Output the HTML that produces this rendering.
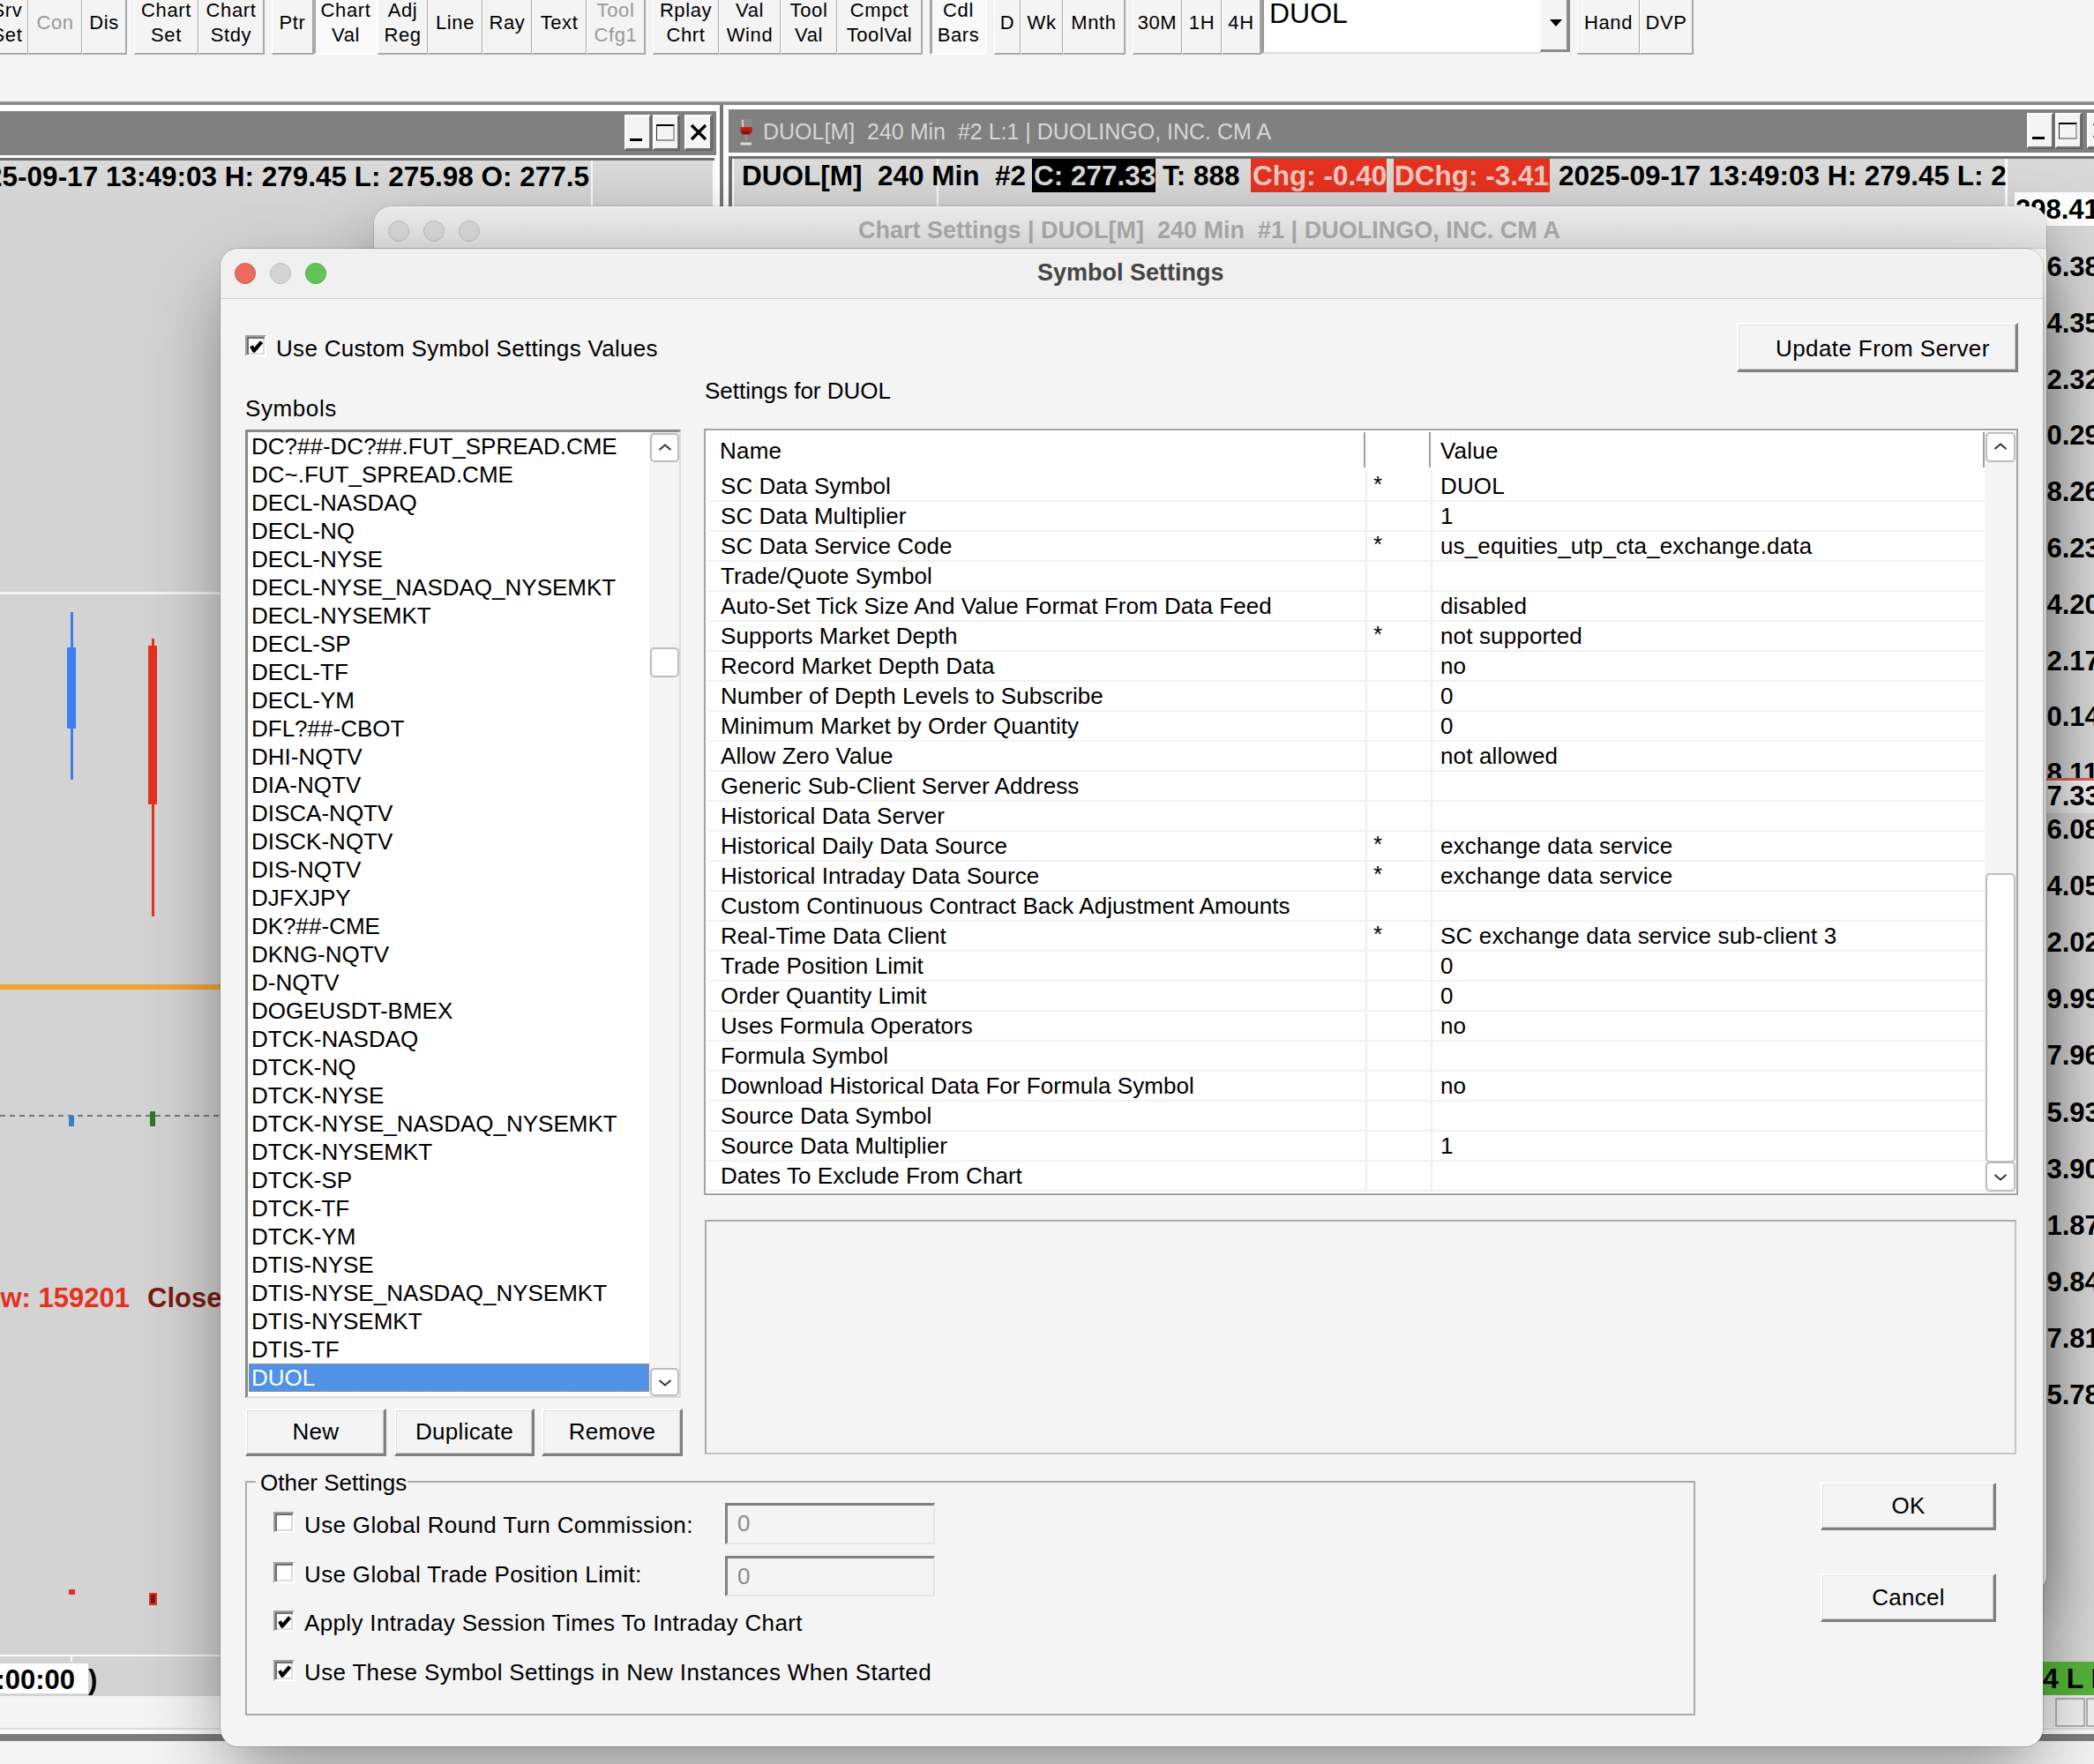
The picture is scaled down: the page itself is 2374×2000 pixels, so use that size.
<!DOCTYPE html><html><head><meta charset="utf-8"><style>
*{margin:0;padding:0;box-sizing:border-box}
html,body{width:2374px;height:2000px;overflow:hidden;background:#f4f4f4;font-family:"Liberation Sans",sans-serif;color:#000}
.abs{position:absolute}
.t{position:absolute;white-space:pre;line-height:1}
.tb{position:absolute;top:0;height:62px;background:#f4f4f4;border-right:2px solid #a9a9a9;border-bottom:2px solid #a9a9a9;border-left:1px solid #fff;font-size:22px;letter-spacing:0.6px;text-align:center;line-height:28px;white-space:pre}
.tb.pr{background-color:#f9f9f9;border-left:3px solid #a8a8a8;border-right:3px solid #fdfdfd;border-bottom:2px solid #fdfdfd}
.tb.g{color:#999}
</style></head><body>

<div class="tb" style="left:-16px;width:49px;padding-top:0px;line-height:28px;"><div style="margin-top:-2px">Srv<br>Set</div></div>
<div class="tb g" style="left:32px;width:62px;"><div style="margin-top:12px">Con</div></div>
<div class="tb" style="left:93px;width:51px;"><div style="margin-top:12px">Dis</div></div>
<div class="tb" style="left:152px;width:74px;padding-top:0px;line-height:28px;"><div style="margin-top:-2px">Chart<br>Set</div></div>
<div class="tb" style="left:225px;width:75px;padding-top:0px;line-height:28px;"><div style="margin-top:-2px">Chart<br>Stdy</div></div>
<div class="tb" style="left:308px;width:48px;"><div style="margin-top:12px">Ptr</div></div>
<div class="tb pr" style="left:355px;width:74px;padding-top:0px;line-height:28px;"><div style="margin-top:-2px">Chart<br>Val</div></div>
<div class="tb" style="left:428px;width:58px;padding-top:0px;line-height:28px;"><div style="margin-top:-2px">Adj<br>Reg</div></div>
<div class="tb" style="left:485px;width:63px;"><div style="margin-top:12px">Line</div></div>
<div class="tb" style="left:547px;width:57px;"><div style="margin-top:12px">Ray</div></div>
<div class="tb" style="left:603px;width:63px;"><div style="margin-top:12px">Text</div></div>
<div class="tb g" style="left:665px;width:67px;padding-top:0px;line-height:28px;"><div style="margin-top:-2px">Tool<br>Cfg1</div></div>
<div class="tb" style="left:740px;width:76px;padding-top:0px;line-height:28px;"><div style="margin-top:-2px">Rplay<br>Chrt</div></div>
<div class="tb" style="left:815px;width:71px;padding-top:0px;line-height:28px;"><div style="margin-top:-2px">Val<br>Wind</div></div>
<div class="tb" style="left:885px;width:65px;padding-top:0px;line-height:28px;"><div style="margin-top:-2px">Tool<br>Val</div></div>
<div class="tb" style="left:949px;width:97px;padding-top:0px;line-height:28px;"><div style="margin-top:-2px">Cmpct<br>ToolVal</div></div>
<div class="tb pr" style="left:1054px;width:65px;padding-top:0px;line-height:28px;"><div style="margin-top:-2px">Cdl<br>Bars</div></div>
<div class="tb" style="left:1127px;width:31px;"><div style="margin-top:12px">D</div></div>
<div class="tb" style="left:1157px;width:49px;"><div style="margin-top:12px">Wk</div></div>
<div class="tb" style="left:1205px;width:71px;"><div style="margin-top:12px">Mnth</div></div>
<div class="tb" style="left:1284px;width:57px;"><div style="margin-top:12px">30M</div></div>
<div class="tb" style="left:1340px;width:46px;"><div style="margin-top:12px">1H</div></div>
<div class="tb" style="left:1385px;width:45px;"><div style="margin-top:12px">4H</div></div>
<div class="tb" style="left:1788px;width:72px;"><div style="margin-top:12px">Hand</div></div>
<div class="tb" style="left:1859px;width:61px;"><div style="margin-top:12px">DVP</div></div>
<div class="abs" style="left:1430px;top:0;width:317px;height:61px;background:#fff;border-left:3px solid #9a9a9a;border-bottom:2px solid #dcdcdc"></div>
<div class="t" style="left:1439px;top:-1px;font-size:32px">DUOL</div>
<div class="abs" style="left:1746px;top:0;width:34px;height:59px;background:#f4f4f4;border-right:4px solid #8a8a8a;border-bottom:3px solid #8a8a8a;border-left:1px solid #fff"></div>
<div class="abs" style="left:1757px;top:22px;width:0;height:0;border-left:7px solid transparent;border-right:7px solid transparent;border-top:8px solid #000"></div>
<div class="abs" style="left:0;top:115px;width:2374px;height:4px;background:#888;border-top:1px solid #a0a0a0"></div>
<div class="abs" style="left:0;top:119px;width:2374px;height:7px;background:#fff"></div>
<div class="abs" style="left:0;top:126px;width:812px;height:50px;background:#808080"></div>
<div class="abs" style="left:708px;top:130px;width:30px;height:40px;background:#f4f4f4;border-top:2px solid #fff;border-left:2px solid #fff;border-right:2px solid #707070;border-bottom:2px solid #707070;box-shadow:1px 1px 0 #606060"></div>
<div class="abs" style="left:714px;top:157px;width:14px;height:3px;background:#000"></div>
<div class="abs" style="left:740px;top:130px;width:30px;height:40px;background:#f4f4f4;border-top:2px solid #fff;border-left:2px solid #fff;border-right:2px solid #707070;border-bottom:2px solid #707070;box-shadow:1px 1px 0 #606060"></div>
<div class="abs" style="left:744px;top:141px;width:21px;height:19px;border:1.5px solid #333;border-top:2.5px solid #000;border-right:2px solid #aaa;border-bottom:2px solid #999"></div>
<div class="abs" style="left:776px;top:130px;width:31px;height:40px;background:#f4f4f4;border-top:2px solid #fff;border-left:2px solid #fff;border-right:2px solid #707070;border-bottom:2px solid #707070;box-shadow:1px 1px 0 #606060"></div>
<svg class="abs" style="left:782px;top:140px" width="20" height="20" viewBox="0 0 20 20"><path d="M2 2L18 18M18 2L2 18" stroke="#000" stroke-width="3.2"/></svg>
<div class="abs" style="left:0;top:176px;width:812px;height:3px;background:#fff"></div>
<div class="abs" style="left:0;top:179px;width:810px;height:3px;background:#6e6e6e"></div>
<div class="abs" style="left:812px;top:119px;width:4px;height:120px;background:#fff"></div>
<div class="abs" style="left:816px;top:119px;width:4px;height:120px;background:#777"></div>
<div class="abs" style="left:820px;top:119px;width:6px;height:120px;background:#fff"></div>
<div class="abs" style="left:0;top:182px;width:809px;height:1760px;background:linear-gradient(#dadada,#d3d3d3 50px,#d3d3d3)"></div>
<div class="abs" style="left:808px;top:182px;width:4px;height:60px;background:#fbfbfb"></div>
<div class="abs" style="left:670px;top:182px;width:2px;height:52px;background:#fafafa"></div>
<div class="t" style="right:1706px;top:185px;font-size:31.5px;font-weight:700;text-align:right">2025-09-17 13:49:03 H: 279.45 L: 275.98 O: 277.5</div>
<div class="abs" style="left:826px;top:124px;width:1548px;height:49px;background:#808080"></div>
<svg class="abs" style="left:836px;top:133px" width="20" height="34" viewBox="0 0 20 34"><rect x="3.5" y="2" width="13" height="9" fill="#999" opacity=".35"/><rect x="5" y="3" width="2" height="8" fill="#e0e0e0" opacity=".8"/><path d="M3.5 11h13v5.5l-2 3h-9l-2-3z" fill="#b01a14"/><rect x="3.5" y="11" width="13" height="2" fill="#c82418"/><rect x="5" y="16" width="8" height="3" fill="#6a0c08" opacity=".6"/><rect x="9" y="20" width="2" height="6" fill="#9a9a9a"/><rect x="3.5" y="28.5" width="12.5" height="3" fill="#dadada"/></svg>
<div class="t" style="left:865px;top:137px;font-size:25px;color:#d6d6d6">DUOL[M]  240 Min  #2 L:1 | DUOLINGO, INC. CM A</div>
<div class="abs" style="left:2298px;top:128px;width:30px;height:40px;background:#f4f4f4;border-top:2px solid #fff;border-left:2px solid #fff;border-right:2px solid #707070;border-bottom:2px solid #707070;box-shadow:1px 1px 0 #606060"></div>
<div class="abs" style="left:2304px;top:155px;width:14px;height:3px;background:#000"></div>
<div class="abs" style="left:2330px;top:128px;width:30px;height:40px;background:#f4f4f4;border-top:2px solid #fff;border-left:2px solid #fff;border-right:2px solid #707070;border-bottom:2px solid #707070;box-shadow:1px 1px 0 #606060"></div>
<div class="abs" style="left:2334px;top:139px;width:21px;height:19px;border:1.5px solid #333;border-top:2.5px solid #000;border-right:2px solid #aaa;border-bottom:2px solid #999"></div>
<div class="abs" style="left:2366px;top:128px;width:30px;height:40px;background:#f4f4f4;border-top:2px solid #fff;border-left:2px solid #fff;border-right:2px solid #707070;border-bottom:2px solid #707070;box-shadow:1px 1px 0 #606060"></div>
<svg class="abs" style="left:2372px;top:138px" width="20" height="20" viewBox="0 0 20 20"><path d="M2 2L18 18M18 2L2 18" stroke="#000" stroke-width="3.2"/></svg>
<div class="abs" style="left:826px;top:173px;width:1548px;height:4px;background:#fff"></div>
<div class="abs" style="left:826px;top:177px;width:1548px;height:3px;background:#6e6e6e"></div>
<div class="abs" style="left:826px;top:177px;width:4px;height:1800px;background:#6e6e6e"></div>
<div class="abs" style="left:830px;top:180px;width:1544px;height:1750px;background:linear-gradient(#dadada,#d3d3d3 53px,#d3d3d3)"></div>
<div class="abs" style="left:830px;top:180px;width:2px;height:55px;background:#fff"></div>
<div class="abs" style="left:1062px;top:180px;width:2px;height:55px;background:#fafafa"></div>
<div class="abs" style="left:2273px;top:180px;width:3px;height:55px;background:#fafafa"></div>
<div class="t" style="left:841px;top:184px;font-size:31.5px;font-weight:700">DUOL[M]  240 Min  #2</div>
<div class="abs" style="left:1170px;top:180px;width:140px;height:38px;background:#000"></div>
<div class="t" style="left:1172px;top:184px;font-size:31.5px;font-weight:700;color:#d8d8d8">C: 277.33</div>
<div class="t" style="left:1318px;top:184px;font-size:31.5px;font-weight:700">T: 888</div>
<div class="abs" style="left:1418px;top:180px;width:154px;height:38px;background:#e3321f"></div>
<div class="t" style="left:1420px;top:184px;font-size:31.5px;font-weight:700;color:#f0c8c0">Chg: -0.40</div>
<div class="abs" style="left:1580px;top:180px;width:177px;height:38px;background:#e3321f"></div>
<div class="t" style="left:1581px;top:184px;font-size:31.5px;font-weight:700;color:#f0c8c0">DChg: -3.41</div>
<div class="t" style="left:1767px;top:184px;font-size:31.5px;font-weight:700">2025-09-17 13:49:03 H: 279.45 L: 2</div>
<div class="abs" style="left:2316px;top:235px;width:58px;height:1650px;background:linear-gradient(90deg,#d0d0d0,#d6d6d6 30px,#d8d8d8)"></div>
<div class="abs" style="left:2284px;top:218px;width:90px;height:38px;background:#fff"></div>
<div class="t" style="left:2285px;top:222px;font-size:31px;font-weight:700">298.41</div>
<div class="t" style="left:2286px;top:287.0px;font-size:31px;font-weight:700">296.38</div>
<div class="t" style="left:2286px;top:350.8px;font-size:31px;font-weight:700">294.35</div>
<div class="t" style="left:2286px;top:414.6px;font-size:31px;font-weight:700">292.32</div>
<div class="t" style="left:2286px;top:478.4px;font-size:31px;font-weight:700">290.29</div>
<div class="t" style="left:2286px;top:542.2px;font-size:31px;font-weight:700">288.26</div>
<div class="t" style="left:2286px;top:606.0px;font-size:31px;font-weight:700">286.23</div>
<div class="t" style="left:2286px;top:669.8px;font-size:31px;font-weight:700">284.20</div>
<div class="t" style="left:2286px;top:733.6px;font-size:31px;font-weight:700">282.17</div>
<div class="t" style="left:2286px;top:797.4px;font-size:31px;font-weight:700">280.14</div>
<div class="t" style="left:2286px;top:861.2px;font-size:31px;font-weight:700">278.11</div>
<div class="t" style="left:2286px;top:925.0px;font-size:31px;font-weight:700">276.08</div>
<div class="t" style="left:2286px;top:989.1px;font-size:31px;font-weight:700">274.05</div>
<div class="t" style="left:2286px;top:1053.2px;font-size:31px;font-weight:700">272.02</div>
<div class="t" style="left:2286px;top:1117.3px;font-size:31px;font-weight:700">269.99</div>
<div class="t" style="left:2286px;top:1181.4px;font-size:31px;font-weight:700">267.96</div>
<div class="t" style="left:2286px;top:1245.5px;font-size:31px;font-weight:700">265.93</div>
<div class="t" style="left:2286px;top:1309.6px;font-size:31px;font-weight:700">263.90</div>
<div class="t" style="left:2286px;top:1373.7px;font-size:31px;font-weight:700">261.87</div>
<div class="t" style="left:2286px;top:1437.8px;font-size:31px;font-weight:700">259.84</div>
<div class="t" style="left:2286px;top:1501.9px;font-size:31px;font-weight:700">257.81</div>
<div class="t" style="left:2286px;top:1566.0px;font-size:31px;font-weight:700">255.78</div>
<div class="abs" style="left:2316px;top:882px;width:58px;height:3px;background:#e06060"></div>
<div class="abs" style="left:2316px;top:885px;width:58px;height:37px;background:linear-gradient(#f8f8f8,#e8e8e8)"></div>
<div class="t" style="left:2286px;top:887px;font-size:31px;font-weight:700">277.33</div>
<div class="abs" style="left:0;top:671px;width:812px;height:3px;background:#f4f4f4"></div>
<div class="abs" style="left:80px;top:694px;width:3px;height:190px;background:#3b7ff0"></div>
<div class="abs" style="left:76px;top:734px;width:10px;height:92px;background:#3b7ff0"></div>
<div class="abs" style="left:172px;top:724px;width:3px;height:315px;background:#e3321f"></div>
<div class="abs" style="left:168px;top:732px;width:10px;height:180px;background:#e3321f"></div>
<div class="abs" style="left:0;top:1116px;width:812px;height:6px;background:#f0a438"></div>
<div class="abs" style="left:0;top:1264px;width:812px;height:2px;background:repeating-linear-gradient(90deg,#777 0 6px,transparent 6px 11px)"></div>
<div class="abs" style="left:78px;top:1265px;width:6px;height:12px;background:#3a80c8"></div>
<div class="abs" style="left:170px;top:1260px;width:6px;height:17px;background:#2c7a22"></div>
<div class="t" style="right:2227px;top:1456px;font-size:31px;font-weight:700;color:#e3321f">Volume Now: 159201</div>
<div class="t" style="left:167px;top:1456px;font-size:31px;font-weight:700;color:#7a1a10">Close</div>
<div class="abs" style="left:78px;top:1802px;width:7px;height:6px;background:#e3321f"></div>
<div class="abs" style="left:169px;top:1806px;width:9px;height:14px;background:#7a1a10;border:2px solid #e3321f"></div>
<div class="abs" style="left:0;top:1876px;width:812px;height:2px;background:#f8f8f8"></div>
<div class="abs" style="left:80px;top:1877px;width:2px;height:7px;background:#f8f8f8"></div>
<div class="abs" style="left:0;top:1886px;width:100px;height:34px;background:#fff"></div>
<div class="t" style="right:2289px;top:1889px;font-size:31px;font-weight:700">2025-09-17 12:00:00</div>
<div class="t" style="left:100px;top:1889px;font-size:31px;font-weight:700">)</div>
<div class="abs" style="left:0;top:1923px;width:2374px;height:36px;background:#f4f4f4"></div>
<div class="abs" style="left:0;top:1959px;width:2374px;height:2px;background:#dcdcdc"></div>
<div class="abs" style="left:0;top:1961px;width:2374px;height:5px;background:#fafafa"></div>
<div class="abs" style="left:0;top:1966px;width:2374px;height:8px;background:#7c7c7c"></div>
<div class="abs" style="left:0;top:1974px;width:2374px;height:26px;background:#f4f4f4"></div>
<div class="abs" style="left:2316px;top:1884px;width:58px;height:38px;background:#57b33a"></div>
<div class="t" style="left:2316px;top:1887px;font-size:32px;font-weight:700">4 L E</div>
<div class="abs" style="left:2316px;top:1922px;width:58px;height:36px;background:#ececec"></div>
<div class="abs" style="left:2330px;top:1925px;width:34px;height:33px;border:2px solid #b0b0b0;background:#f0f0f0"></div>
<div class="abs" style="left:2365px;top:1925px;width:34px;height:33px;border:2px solid #b0b0b0;background:#f0f0f0"></div>
<div class="abs" style="left:424px;top:234px;width:1896px;height:1572px;border-radius:20px;background:#f4f4f4;box-shadow:0 30px 80px -10px rgba(0,0,0,.4),0 0 0 1px rgba(0,0,0,.12);overflow:hidden"><div class="abs" style="left:0;top:0;width:1896px;height:48px;background:linear-gradient(#ebebeb,#e0e0e0);border-top:1px solid #f6f6f6;border-bottom:1px solid #c8c8c8"></div></div>
<div class="abs" style="left:440px;top:250px;width:24px;height:24px;border-radius:50%;background:#d6d6d6;border:1px solid #bdbdbd"></div>
<div class="abs" style="left:480px;top:250px;width:24px;height:24px;border-radius:50%;background:#d6d6d6;border:1px solid #bdbdbd"></div>
<div class="abs" style="left:520px;top:250px;width:24px;height:24px;border-radius:50%;background:#d6d6d6;border:1px solid #bdbdbd"></div>
<div class="t" style="left:973px;top:248px;font-size:27px;font-weight:700;color:#a9a9a9">Chart Settings | DUOL[M]  240 Min  #1 | DUOLINGO, INC. CM A</div>
<div class="abs" style="left:250px;top:282px;width:2066px;height:1698px;border-radius:20px;background:#f4f4f4;box-shadow:0 36px 90px -10px rgba(0,0,0,.45),0 0 0 1px rgba(0,0,0,.15);overflow:hidden"><div class="abs" style="left:0;top:0;width:2066px;height:57px;background:#eff0ef;border-bottom:1px solid #cdcdcd"></div></div>
<div class="abs" style="left:266px;top:298px;width:24px;height:24px;border-radius:50%;background:#ed6a5e;border:1px solid #d05448"></div>
<div class="abs" style="left:306px;top:298px;width:24px;height:24px;border-radius:50%;background:#d4d4d4;border:1px solid #bcbcbc"></div>
<div class="abs" style="left:346px;top:298px;width:24px;height:24px;border-radius:50%;background:#61c554;border:1px solid #4fa843"></div>
<div class="t" style="left:1176px;top:296px;font-size:27px;font-weight:700;color:#454545">Symbol Settings</div>
<div class="abs" style="left:278px;top:380px;width:24px;height:24px;background:#fff;border-top:2px solid #a0a0a0;border-left:2px solid #a0a0a0;border-right:2px solid #fff;border-bottom:2px solid #fff;box-shadow:inset 2px 2px 0 #6e6e6e, inset -2px -2px 0 #dcdcdc"></div>
<svg class="abs" style="left:278px;top:380px" width="24" height="24" viewBox="0 0 24 24"><path d="M7 12.3L10 17.6L18.6 7.6" fill="none" stroke="#000" stroke-width="4.2" stroke-linejoin="round"/></svg>
<div class="t" style="left:313px;top:381.8px;font-size:26px;color:#000;letter-spacing:0.3px;font-weight:400;">Use Custom Symbol Settings Values</div>
<div class="abs" style="left:1969px;top:366px;width:319px;height:56px;background:#f4f4f4;border-top:2px solid #fdfdfd;border-left:2px solid #fdfdfd;border-right:3px solid #808080;border-bottom:3px solid #808080;box-shadow:inset -1px -1px 0 #c8c8c8, inset 1px 1px 0 #e0e0e0"></div>
<div class="t" style="left:2013px;top:382.4px;font-size:26px;color:#000;letter-spacing:0.4px;font-weight:400;">Update From Server</div>
<div class="t" style="left:278px;top:450.0px;font-size:26px;color:#000;letter-spacing:0.6px;font-weight:400;">Symbols</div>
<div class="t" style="left:799px;top:429.7px;font-size:26px;color:#000;letter-spacing:0px;font-weight:400;">Settings for DUOL</div>
<div class="abs" style="left:278px;top:487px;width:493px;height:98px;"></div>
<div class="abs" style="left:278px;top:487px;width:494px;height:1098px;background:#fff;border-top:3px solid #8a8a8a;border-left:3px solid #8a8a8a;border-right:2px solid #dedede;border-bottom:2px solid #dedede"></div>
<div class="abs" style="left:736px;top:490px;width:34px;height:1093px;background:#f4f4f4"></div>
<div class="abs" style="left:737px;top:491px;width:33px;height:33px;background:#fff;border:2px solid #bdbdbd;border-radius:5px"></div>
<svg class="abs" style="left:745.5px;top:501.5px" width="16" height="10" viewBox="0 0 16 10"><path d="M1.5 8L8 2.5L14.5 8" fill="none" stroke="#333" stroke-width="2"/></svg>
<div class="abs" style="left:737px;top:734px;width:33px;height:34px;background:#fff;border:2px solid #bdbdbd;border-radius:5px"></div>
<div class="abs" style="left:737px;top:1551px;width:33px;height:32px;background:#fff;border:2px solid #bdbdbd;border-radius:5px"></div>
<svg class="abs" style="left:745.5px;top:1563.0px" width="16" height="10" viewBox="0 0 16 10"><path d="M1.5 2L8 7.5L14.5 2" fill="none" stroke="#333" stroke-width="2"/></svg>
<div class="t" style="left:285px;top:493.4px;font-size:26px;color:#000;letter-spacing:0px;font-weight:400;">DC?##-DC?##.FUT_SPREAD.CME</div>
<div class="t" style="left:285px;top:525.4px;font-size:26px;color:#000;letter-spacing:0px;font-weight:400;">DC~.FUT_SPREAD.CME</div>
<div class="t" style="left:285px;top:557.4px;font-size:26px;color:#000;letter-spacing:0px;font-weight:400;">DECL-NASDAQ</div>
<div class="t" style="left:285px;top:589.4px;font-size:26px;color:#000;letter-spacing:0px;font-weight:400;">DECL-NQ</div>
<div class="t" style="left:285px;top:621.4px;font-size:26px;color:#000;letter-spacing:0px;font-weight:400;">DECL-NYSE</div>
<div class="t" style="left:285px;top:653.4px;font-size:26px;color:#000;letter-spacing:0px;font-weight:400;">DECL-NYSE_NASDAQ_NYSEMKT</div>
<div class="t" style="left:285px;top:685.4px;font-size:26px;color:#000;letter-spacing:0px;font-weight:400;">DECL-NYSEMKT</div>
<div class="t" style="left:285px;top:717.4px;font-size:26px;color:#000;letter-spacing:0px;font-weight:400;">DECL-SP</div>
<div class="t" style="left:285px;top:749.4px;font-size:26px;color:#000;letter-spacing:0px;font-weight:400;">DECL-TF</div>
<div class="t" style="left:285px;top:781.4px;font-size:26px;color:#000;letter-spacing:0px;font-weight:400;">DECL-YM</div>
<div class="t" style="left:285px;top:813.4px;font-size:26px;color:#000;letter-spacing:0px;font-weight:400;">DFL?##-CBOT</div>
<div class="t" style="left:285px;top:845.4px;font-size:26px;color:#000;letter-spacing:0px;font-weight:400;">DHI-NQTV</div>
<div class="t" style="left:285px;top:877.4px;font-size:26px;color:#000;letter-spacing:0px;font-weight:400;">DIA-NQTV</div>
<div class="t" style="left:285px;top:909.4px;font-size:26px;color:#000;letter-spacing:0px;font-weight:400;">DISCA-NQTV</div>
<div class="t" style="left:285px;top:941.4px;font-size:26px;color:#000;letter-spacing:0px;font-weight:400;">DISCK-NQTV</div>
<div class="t" style="left:285px;top:973.4px;font-size:26px;color:#000;letter-spacing:0px;font-weight:400;">DIS-NQTV</div>
<div class="t" style="left:285px;top:1005.4px;font-size:26px;color:#000;letter-spacing:0px;font-weight:400;">DJFXJPY</div>
<div class="t" style="left:285px;top:1037.4px;font-size:26px;color:#000;letter-spacing:0px;font-weight:400;">DK?##-CME</div>
<div class="t" style="left:285px;top:1069.4px;font-size:26px;color:#000;letter-spacing:0px;font-weight:400;">DKNG-NQTV</div>
<div class="t" style="left:285px;top:1101.4px;font-size:26px;color:#000;letter-spacing:0px;font-weight:400;">D-NQTV</div>
<div class="t" style="left:285px;top:1133.4px;font-size:26px;color:#000;letter-spacing:0px;font-weight:400;">DOGEUSDT-BMEX</div>
<div class="t" style="left:285px;top:1165.4px;font-size:26px;color:#000;letter-spacing:0px;font-weight:400;">DTCK-NASDAQ</div>
<div class="t" style="left:285px;top:1197.4px;font-size:26px;color:#000;letter-spacing:0px;font-weight:400;">DTCK-NQ</div>
<div class="t" style="left:285px;top:1229.4px;font-size:26px;color:#000;letter-spacing:0px;font-weight:400;">DTCK-NYSE</div>
<div class="t" style="left:285px;top:1261.4px;font-size:26px;color:#000;letter-spacing:0px;font-weight:400;">DTCK-NYSE_NASDAQ_NYSEMKT</div>
<div class="t" style="left:285px;top:1293.4px;font-size:26px;color:#000;letter-spacing:0px;font-weight:400;">DTCK-NYSEMKT</div>
<div class="t" style="left:285px;top:1325.4px;font-size:26px;color:#000;letter-spacing:0px;font-weight:400;">DTCK-SP</div>
<div class="t" style="left:285px;top:1357.4px;font-size:26px;color:#000;letter-spacing:0px;font-weight:400;">DTCK-TF</div>
<div class="t" style="left:285px;top:1389.4px;font-size:26px;color:#000;letter-spacing:0px;font-weight:400;">DTCK-YM</div>
<div class="t" style="left:285px;top:1421.4px;font-size:26px;color:#000;letter-spacing:0px;font-weight:400;">DTIS-NYSE</div>
<div class="t" style="left:285px;top:1453.4px;font-size:26px;color:#000;letter-spacing:0px;font-weight:400;">DTIS-NYSE_NASDAQ_NYSEMKT</div>
<div class="t" style="left:285px;top:1485.4px;font-size:26px;color:#000;letter-spacing:0px;font-weight:400;">DTIS-NYSEMKT</div>
<div class="t" style="left:285px;top:1517.4px;font-size:26px;color:#000;letter-spacing:0px;font-weight:400;">DTIS-TF</div>
<div class="abs" style="left:282px;top:1546px;width:454px;height:32px;background:#4f92e8;outline:1px dotted #c08040;outline-offset:-1px"></div>
<div class="t" style="left:285px;top:1549.4px;font-size:26px;color:#fff;letter-spacing:0px;font-weight:400;">DUOL</div>
<div class="abs" style="left:798px;top:486px;width:1490px;height:869px;background:#fff;border:2px solid #a4a4a4"></div>
<div class="abs" style="left:2250px;top:489px;width:36px;height:863px;background:#f4f4f4"></div>
<div class="abs" style="left:2248px;top:490px;width:2px;height:40px;background:#a0a0a0"></div>
<div class="abs" style="left:1546px;top:490px;width:2px;height:40px;background:#a0a0a0"></div>
<div class="abs" style="left:1620px;top:490px;width:2px;height:40px;background:#a0a0a0"></div>
<div class="t" style="left:816px;top:498.0px;font-size:26px;color:#000;letter-spacing:0.2px;font-weight:400;">Name</div>
<div class="t" style="left:1633px;top:498.0px;font-size:26px;color:#000;letter-spacing:0.2px;font-weight:400;">Value</div>
<div class="abs" style="left:1548px;top:533px;width:2px;height:817px;background:#efefef"></div>
<div class="abs" style="left:1622px;top:533px;width:2px;height:817px;background:#efefef"></div>
<div class="abs" style="left:802px;top:567px;width:1448px;height:2px;background:#f1f1f1"></div>
<div class="t" style="left:817px;top:537.6px;font-size:26px;color:#000;letter-spacing:0.05px;font-weight:400;">SC Data Symbol</div>
<div class="t" style="left:1557px;top:535.6px;font-size:26px;color:#000;letter-spacing:0px;font-weight:400;">*</div>
<div class="t" style="left:1633px;top:537.6px;font-size:26px;color:#000;letter-spacing:0.15px;font-weight:400;">DUOL</div>
<div class="abs" style="left:802px;top:601px;width:1448px;height:2px;background:#f1f1f1"></div>
<div class="t" style="left:817px;top:571.6px;font-size:26px;color:#000;letter-spacing:0.05px;font-weight:400;">SC Data Multiplier</div>
<div class="t" style="left:1633px;top:571.6px;font-size:26px;color:#000;letter-spacing:0.15px;font-weight:400;">1</div>
<div class="abs" style="left:802px;top:635px;width:1448px;height:2px;background:#f1f1f1"></div>
<div class="t" style="left:817px;top:605.6px;font-size:26px;color:#000;letter-spacing:0.05px;font-weight:400;">SC Data Service Code</div>
<div class="t" style="left:1557px;top:603.6px;font-size:26px;color:#000;letter-spacing:0px;font-weight:400;">*</div>
<div class="t" style="left:1633px;top:605.6px;font-size:26px;color:#000;letter-spacing:0.15px;font-weight:400;">us_equities_utp_cta_exchange.data</div>
<div class="abs" style="left:802px;top:669px;width:1448px;height:2px;background:#f1f1f1"></div>
<div class="t" style="left:817px;top:639.6px;font-size:26px;color:#000;letter-spacing:0.05px;font-weight:400;">Trade/Quote Symbol</div>
<div class="abs" style="left:802px;top:703px;width:1448px;height:2px;background:#f1f1f1"></div>
<div class="t" style="left:817px;top:673.6px;font-size:26px;color:#000;letter-spacing:0.05px;font-weight:400;">Auto-Set Tick Size And Value Format From Data Feed</div>
<div class="t" style="left:1633px;top:673.6px;font-size:26px;color:#000;letter-spacing:0.15px;font-weight:400;">disabled</div>
<div class="abs" style="left:802px;top:737px;width:1448px;height:2px;background:#f1f1f1"></div>
<div class="t" style="left:817px;top:707.6px;font-size:26px;color:#000;letter-spacing:0.05px;font-weight:400;">Supports Market Depth</div>
<div class="t" style="left:1557px;top:705.6px;font-size:26px;color:#000;letter-spacing:0px;font-weight:400;">*</div>
<div class="t" style="left:1633px;top:707.6px;font-size:26px;color:#000;letter-spacing:0.15px;font-weight:400;">not supported</div>
<div class="abs" style="left:802px;top:771px;width:1448px;height:2px;background:#f1f1f1"></div>
<div class="t" style="left:817px;top:741.6px;font-size:26px;color:#000;letter-spacing:0.05px;font-weight:400;">Record Market Depth Data</div>
<div class="t" style="left:1633px;top:741.6px;font-size:26px;color:#000;letter-spacing:0.15px;font-weight:400;">no</div>
<div class="abs" style="left:802px;top:805px;width:1448px;height:2px;background:#f1f1f1"></div>
<div class="t" style="left:817px;top:775.6px;font-size:26px;color:#000;letter-spacing:0.05px;font-weight:400;">Number of Depth Levels to Subscribe</div>
<div class="t" style="left:1633px;top:775.6px;font-size:26px;color:#000;letter-spacing:0.15px;font-weight:400;">0</div>
<div class="abs" style="left:802px;top:839px;width:1448px;height:2px;background:#f1f1f1"></div>
<div class="t" style="left:817px;top:809.6px;font-size:26px;color:#000;letter-spacing:0.05px;font-weight:400;">Minimum Market by Order Quantity</div>
<div class="t" style="left:1633px;top:809.6px;font-size:26px;color:#000;letter-spacing:0.15px;font-weight:400;">0</div>
<div class="abs" style="left:802px;top:873px;width:1448px;height:2px;background:#f1f1f1"></div>
<div class="t" style="left:817px;top:843.6px;font-size:26px;color:#000;letter-spacing:0.05px;font-weight:400;">Allow Zero Value</div>
<div class="t" style="left:1633px;top:843.6px;font-size:26px;color:#000;letter-spacing:0.15px;font-weight:400;">not allowed</div>
<div class="abs" style="left:802px;top:907px;width:1448px;height:2px;background:#f1f1f1"></div>
<div class="t" style="left:817px;top:877.6px;font-size:26px;color:#000;letter-spacing:0.05px;font-weight:400;">Generic Sub-Client Server Address</div>
<div class="abs" style="left:802px;top:941px;width:1448px;height:2px;background:#f1f1f1"></div>
<div class="t" style="left:817px;top:911.6px;font-size:26px;color:#000;letter-spacing:0.05px;font-weight:400;">Historical Data Server</div>
<div class="abs" style="left:802px;top:975px;width:1448px;height:2px;background:#f1f1f1"></div>
<div class="t" style="left:817px;top:945.6px;font-size:26px;color:#000;letter-spacing:0.05px;font-weight:400;">Historical Daily Data Source</div>
<div class="t" style="left:1557px;top:943.6px;font-size:26px;color:#000;letter-spacing:0px;font-weight:400;">*</div>
<div class="t" style="left:1633px;top:945.6px;font-size:26px;color:#000;letter-spacing:0.15px;font-weight:400;">exchange data service</div>
<div class="abs" style="left:802px;top:1009px;width:1448px;height:2px;background:#f1f1f1"></div>
<div class="t" style="left:817px;top:979.6px;font-size:26px;color:#000;letter-spacing:0.05px;font-weight:400;">Historical Intraday Data Source</div>
<div class="t" style="left:1557px;top:977.6px;font-size:26px;color:#000;letter-spacing:0px;font-weight:400;">*</div>
<div class="t" style="left:1633px;top:979.6px;font-size:26px;color:#000;letter-spacing:0.15px;font-weight:400;">exchange data service</div>
<div class="abs" style="left:802px;top:1043px;width:1448px;height:2px;background:#f1f1f1"></div>
<div class="t" style="left:817px;top:1013.6px;font-size:26px;color:#000;letter-spacing:0.05px;font-weight:400;">Custom Continuous Contract Back Adjustment Amounts</div>
<div class="abs" style="left:802px;top:1077px;width:1448px;height:2px;background:#f1f1f1"></div>
<div class="t" style="left:817px;top:1047.6px;font-size:26px;color:#000;letter-spacing:0.05px;font-weight:400;">Real-Time Data Client</div>
<div class="t" style="left:1557px;top:1045.6px;font-size:26px;color:#000;letter-spacing:0px;font-weight:400;">*</div>
<div class="t" style="left:1633px;top:1047.6px;font-size:26px;color:#000;letter-spacing:0.15px;font-weight:400;">SC exchange data service sub-client 3</div>
<div class="abs" style="left:802px;top:1111px;width:1448px;height:2px;background:#f1f1f1"></div>
<div class="t" style="left:817px;top:1081.6px;font-size:26px;color:#000;letter-spacing:0.05px;font-weight:400;">Trade Position Limit</div>
<div class="t" style="left:1633px;top:1081.6px;font-size:26px;color:#000;letter-spacing:0.15px;font-weight:400;">0</div>
<div class="abs" style="left:802px;top:1145px;width:1448px;height:2px;background:#f1f1f1"></div>
<div class="t" style="left:817px;top:1115.6px;font-size:26px;color:#000;letter-spacing:0.05px;font-weight:400;">Order Quantity Limit</div>
<div class="t" style="left:1633px;top:1115.6px;font-size:26px;color:#000;letter-spacing:0.15px;font-weight:400;">0</div>
<div class="abs" style="left:802px;top:1179px;width:1448px;height:2px;background:#f1f1f1"></div>
<div class="t" style="left:817px;top:1149.6px;font-size:26px;color:#000;letter-spacing:0.05px;font-weight:400;">Uses Formula Operators</div>
<div class="t" style="left:1633px;top:1149.6px;font-size:26px;color:#000;letter-spacing:0.15px;font-weight:400;">no</div>
<div class="abs" style="left:802px;top:1213px;width:1448px;height:2px;background:#f1f1f1"></div>
<div class="t" style="left:817px;top:1183.6px;font-size:26px;color:#000;letter-spacing:0.05px;font-weight:400;">Formula Symbol</div>
<div class="abs" style="left:802px;top:1247px;width:1448px;height:2px;background:#f1f1f1"></div>
<div class="t" style="left:817px;top:1217.6px;font-size:26px;color:#000;letter-spacing:0.05px;font-weight:400;">Download Historical Data For Formula Symbol</div>
<div class="t" style="left:1633px;top:1217.6px;font-size:26px;color:#000;letter-spacing:0.15px;font-weight:400;">no</div>
<div class="abs" style="left:802px;top:1281px;width:1448px;height:2px;background:#f1f1f1"></div>
<div class="t" style="left:817px;top:1251.6px;font-size:26px;color:#000;letter-spacing:0.05px;font-weight:400;">Source Data Symbol</div>
<div class="abs" style="left:802px;top:1315px;width:1448px;height:2px;background:#f1f1f1"></div>
<div class="t" style="left:817px;top:1285.6px;font-size:26px;color:#000;letter-spacing:0.05px;font-weight:400;">Source Data Multiplier</div>
<div class="t" style="left:1633px;top:1285.6px;font-size:26px;color:#000;letter-spacing:0.15px;font-weight:400;">1</div>
<div class="abs" style="left:802px;top:1349px;width:1448px;height:2px;background:#f1f1f1"></div>
<div class="t" style="left:817px;top:1319.6px;font-size:26px;color:#000;letter-spacing:0.05px;font-weight:400;">Dates To Exclude From Chart</div>
<div class="abs" style="left:2251px;top:490px;width:34px;height:34px;background:#fff;border:2px solid #bdbdbd;border-radius:5px"></div>
<svg class="abs" style="left:2260.0px;top:501.0px" width="16" height="10" viewBox="0 0 16 10"><path d="M1.5 8L8 2.5L14.5 8" fill="none" stroke="#333" stroke-width="2"/></svg>
<div class="abs" style="left:2251px;top:990px;width:34px;height:328px;background:#fff;border:2px solid #bdbdbd;border-radius:5px"></div>
<div class="abs" style="left:2251px;top:1317px;width:34px;height:34px;background:#fff;border:2px solid #bdbdbd;border-radius:5px"></div>
<svg class="abs" style="left:2260.0px;top:1330.0px" width="16" height="10" viewBox="0 0 16 10"><path d="M1.5 2L8 7.5L14.5 2" fill="none" stroke="#333" stroke-width="2"/></svg>
<div class="abs" style="left:799px;top:1383px;width:1487px;height:266px;border:2px solid #aaaaaa;border-right-color:#c4c4c4;border-bottom-color:#c4c4c4"></div>
<div class="abs" style="left:278px;top:1597px;width:160px;height:54px;background:#f4f4f4;border-top:2px solid #fdfdfd;border-left:2px solid #fdfdfd;border-right:3px solid #808080;border-bottom:3px solid #808080;box-shadow:inset -1px -1px 0 #c8c8c8, inset 1px 1px 0 #e0e0e0"></div>
<div class="t" style="left:278px;width:160px;text-align:center;top:1610.1px;font-size:26px;letter-spacing:0.3px">New</div>
<div class="abs" style="left:447px;top:1597px;width:159px;height:54px;background:#f4f4f4;border-top:2px solid #fdfdfd;border-left:2px solid #fdfdfd;border-right:3px solid #808080;border-bottom:3px solid #808080;box-shadow:inset -1px -1px 0 #c8c8c8, inset 1px 1px 0 #e0e0e0"></div>
<div class="t" style="left:447px;width:159px;text-align:center;top:1610.1px;font-size:26px;letter-spacing:0.3px">Duplicate</div>
<div class="abs" style="left:614px;top:1597px;width:160px;height:54px;background:#f4f4f4;border-top:2px solid #fdfdfd;border-left:2px solid #fdfdfd;border-right:3px solid #808080;border-bottom:3px solid #808080;box-shadow:inset -1px -1px 0 #c8c8c8, inset 1px 1px 0 #e0e0e0"></div>
<div class="t" style="left:614px;width:160px;text-align:center;top:1610.1px;font-size:26px;letter-spacing:0.3px">Remove</div>
<div class="abs" style="left:278px;top:1679px;width:1644px;height:266px;border:2px solid #aaaaaa"></div>
<div class="abs" style="left:290px;top:1670px;width:172px;height:20px;background:#f4f4f4"></div>
<div class="t" style="left:295px;top:1668.2px;font-size:26px;color:#000;letter-spacing:0px;font-weight:400;">Other Settings</div>
<div class="abs" style="left:310px;top:1714px;width:24px;height:24px;background:#fff;border-top:2px solid #a0a0a0;border-left:2px solid #a0a0a0;border-right:2px solid #fff;border-bottom:2px solid #fff;box-shadow:inset 2px 2px 0 #6e6e6e, inset -2px -2px 0 #dcdcdc"></div>
<div class="t" style="left:345px;top:1715.7px;font-size:26px;color:#000;letter-spacing:0.35px;font-weight:400;">Use Global Round Turn Commission:</div>
<div class="abs" style="left:310px;top:1771px;width:24px;height:24px;background:#fff;border-top:2px solid #a0a0a0;border-left:2px solid #a0a0a0;border-right:2px solid #fff;border-bottom:2px solid #fff;box-shadow:inset 2px 2px 0 #6e6e6e, inset -2px -2px 0 #dcdcdc"></div>
<div class="t" style="left:345px;top:1771.7px;font-size:26px;color:#000;letter-spacing:0.35px;font-weight:400;">Use Global Trade Position Limit:</div>
<div class="abs" style="left:310px;top:1826px;width:24px;height:24px;background:#fff;border-top:2px solid #a0a0a0;border-left:2px solid #a0a0a0;border-right:2px solid #fff;border-bottom:2px solid #fff;box-shadow:inset 2px 2px 0 #6e6e6e, inset -2px -2px 0 #dcdcdc"></div>
<svg class="abs" style="left:310px;top:1826px" width="24" height="24" viewBox="0 0 24 24"><path d="M7 12.3L10 17.6L18.6 7.6" fill="none" stroke="#000" stroke-width="4.2" stroke-linejoin="round"/></svg>
<div class="t" style="left:345px;top:1827.3px;font-size:26px;color:#000;letter-spacing:0.35px;font-weight:400;">Apply Intraday Session Times To Intraday Chart</div>
<div class="abs" style="left:310px;top:1882px;width:24px;height:24px;background:#fff;border-top:2px solid #a0a0a0;border-left:2px solid #a0a0a0;border-right:2px solid #fff;border-bottom:2px solid #fff;box-shadow:inset 2px 2px 0 #6e6e6e, inset -2px -2px 0 #dcdcdc"></div>
<svg class="abs" style="left:310px;top:1882px" width="24" height="24" viewBox="0 0 24 24"><path d="M7 12.3L10 17.6L18.6 7.6" fill="none" stroke="#000" stroke-width="4.2" stroke-linejoin="round"/></svg>
<div class="t" style="left:345px;top:1883.3px;font-size:26px;color:#000;letter-spacing:0.35px;font-weight:400;">Use These Symbol Settings in New Instances When Started</div>
<div class="abs" style="left:822px;top:1704px;width:238px;height:47px;background:#f4f4f4;border-top:3px solid #808080;border-left:3px solid #808080;border-right:2px solid #e6e6e6;border-bottom:2px solid #e6e6e6"></div>
<div class="t" style="left:836px;top:1714.0px;font-size:26px;color:#8a8a8a;letter-spacing:0px;font-weight:400;">0</div>
<div class="abs" style="left:822px;top:1764px;width:238px;height:46px;background:#f4f4f4;border-top:3px solid #808080;border-left:3px solid #808080;border-right:2px solid #e6e6e6;border-bottom:2px solid #e6e6e6"></div>
<div class="t" style="left:836px;top:1774.0px;font-size:26px;color:#8a8a8a;letter-spacing:0px;font-weight:400;">0</div>
<div class="abs" style="left:2064px;top:1681px;width:199px;height:54px;background:#f4f4f4;border-top:2px solid #fdfdfd;border-left:2px solid #fdfdfd;border-right:3px solid #808080;border-bottom:3px solid #808080;box-shadow:inset -1px -1px 0 #c8c8c8, inset 1px 1px 0 #e0e0e0"></div>
<div class="t" style="left:2064px;width:199px;text-align:center;top:1694.0px;font-size:26px;letter-spacing:0.3px">OK</div>
<div class="abs" style="left:2064px;top:1784px;width:199px;height:55px;background:#f4f4f4;border-top:2px solid #fdfdfd;border-left:2px solid #fdfdfd;border-right:3px solid #808080;border-bottom:3px solid #808080;box-shadow:inset -1px -1px 0 #c8c8c8, inset 1px 1px 0 #e0e0e0"></div>
<div class="t" style="left:2064px;width:199px;text-align:center;top:1797.5px;font-size:26px;letter-spacing:0.3px">Cancel</div>
</body></html>
